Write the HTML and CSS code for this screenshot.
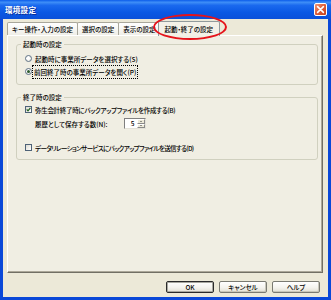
FILE: index.html
```html
<!DOCTYPE html>
<html lang="ja">
<head>
<meta charset="utf-8">
<title>環境設定</title>
<link rel="stylesheet" href="styles.css">
</head>
<body>
<div class="window">
  <div class="titlebar">
    <span class="title">環境設定</span>
    <span class="close-btn"><svg width="9" height="9" viewBox="0 0 9 9"><path d="M1.6 1.6 L7.4 7.4 M7.4 1.6 L1.6 7.4" stroke="#fff" stroke-width="1.6" stroke-linecap="round"/></svg></span>
  </div>
  <div class="client">
    <div class="tabs">
      <div class="tab">キー操作・入力の設定</div>
      <div class="tab">選択の設定</div>
      <div class="tab">表示の設定</div>
      <div class="tab tab--active">起動・終了の設定<span class="mark"></span></div>
    </div>
    <div class="panel">
      <fieldset class="group group--start">
        <legend class="group-title">起動時の設定</legend>
        <div class="row"><span class="radio"></span><span class="label">起動時に事業所データを選択する(S)</span></div>
        <div class="row"><span class="radio radio--on"></span><span class="label label--focus">前回終了時の事業所データを開く(P)</span></div>
      </fieldset>
      <fieldset class="group group--end">
        <legend class="group-title">終了時の設定</legend>
        <div class="row"><span class="check"><svg width="5" height="5" viewBox="0 0 5 5"><path d="M0.7 2.4 L2 3.8 L4.4 0.9" fill="none" stroke="#1d5e1d" stroke-width="1.2"/></svg></span><span class="label label--slight">弥生会計終了時にバックアップファイルを作成する(B)</span></div>
        <div class="row row--sub"><span class="label">履歴として保存する数(N):</span><span class="spin"><span class="spin-value">5</span><span class="spin-arrows"><span class="spin-btn spin-btn--up"></span><span class="spin-btn spin-btn--down"></span></span></span></div>
        <div class="row row--spaced"><span class="check"></span><span class="label label--narrow">データリレーションサービスにバックアップファイルを送信する(D)</span></div>
      </fieldset>
    </div>
    <div class="buttons">
      <button class="btn btn--default">OK</button>
      <button class="btn">キャンセル</button>
      <button class="btn">ヘルプ</button>
    </div>
  </div>
</div>
</body>
</html>
```

FILE: styles.css
```css
* { box-sizing: border-box; }
html, body { margin: 0; padding: 0; }
body {
  width: 331px;
  height: 300px;
  overflow: hidden;
  background: #ECE9D8;
  font-family: "Noto Sans CJK JP", "Noto Sans", sans-serif;
  font-size: 6.5px;
  font-weight: 500;
  color: #000;
  font-feature-settings: "palt";
}
.window {
  width: 331px;
  height: 300px;
  display: flex;
  flex-direction: column;
  background: #0A48D8;
}
.titlebar {
  height: 19px;
  flex: none;
  display: flex;
  align-items: center;
  justify-content: space-between;
  padding: 0 4px 0 5px;
  background: linear-gradient(#0B5CEA 0%, #3E8EF7 12%, #1A69EE 28%, #0A58E4 65%, #0A50DA 100%);
}
.title {
  color: #fff;
  font-weight: bold;
  font-size: 7.5px;
  letter-spacing: 0.3px;
  text-shadow: 1px 1px 0 #0B2F9B;
  font-feature-settings: normal;
}
.close-btn {
  width: 13px;
  height: 13px;
  display: flex;
  align-items: center;
  justify-content: center;
  border: 1px solid #fff;
  border-radius: 2px;
  background: linear-gradient(135deg, #F0977A 0%, #E0613C 45%, #C5401B 100%);
}
.client {
  flex: 1;
  margin: 0 3px 3px;
  background: #ECE9D8;
  display: flex;
  flex-direction: column;
  padding: 1px 5px 4px 4px;
}
.tabs {
  height: 15px;
  flex: none;
  display: flex;
  align-items: flex-end;
  position: relative;
  z-index: 1;
}
.tab {
  height: 13px;
  padding: 0 4px;
  line-height: 12px;
  white-space: nowrap;
  border: 1px solid #A9A79B;
  border-bottom: none;
  border-radius: 2px 2px 0 0;
  background: linear-gradient(#FFFFFF, #EFEEE7);
  margin-right: -1px;
}
.tab--active {
  position: relative;
  height: 15px;
  line-height: 14px;
  margin: 0 -2px -1px -2px;
  padding: 0 6px;
  border-color: #919B9C;
  background: #F3F1E7;
  z-index: 2;
}
.mark {
  position: absolute;
  left: -6px;
  top: -8px;
  width: 74px;
  height: 26px;
  border: 2px solid #E5131B;
  border-radius: 50%;
}
.panel {
  flex: 1;
  background: #F0EEE3;
  border-left: 1px solid #FFFFFF;
  border-top: 1px solid #FFFFFF;
  border-right: 1px solid #716F64;
  border-bottom: 1px solid #716F64;
  box-shadow: inset -1px -1px 0 #ACA899;
  padding: 4px 4px 0 8px;
}
.group {
  margin: 0;
  min-width: 0;
  padding: 4px 6px 6px 8px;
  border: 1px solid #D0D0BF;
  border-radius: 3px;
}
.group--end {
  margin-top: 8px;
  padding-top: 2px;
  padding-bottom: 5px;
}
.group-title {
  padding: 0 2px;
  margin-left: -4px;
  line-height: 8px;
}
.row {
  display: flex;
  align-items: center;
  height: 13px;
  white-space: nowrap;
}
.row--sub {
  margin-top: 1px;
  padding-left: 10px;
}
.row--spaced {
  margin-top: 11px;
}
.label--slight { letter-spacing: -0.3px; }
.label--narrow { letter-spacing: -0.65px; }
.radio {
  width: 7px;
  height: 7px;
  flex: none;
  margin-right: 3px;
  border: 1px solid #5F7386;
  border-radius: 50%;
  background: radial-gradient(circle at 40% 40%, #FFFFFF 30%, #DCDAD0 100%);
  display: flex;
  align-items: center;
  justify-content: center;
}
.radio--on::after {
  content: "";
  width: 3px;
  height: 3px;
  border-radius: 50%;
  background: #2C5A2C;
}
.check {
  width: 7px;
  height: 7px;
  flex: none;
  margin-right: 3px;
  border: 1px solid #4E6277;
  background: linear-gradient(135deg, #DCDAD0, #FFFFFF);
  display: flex;
  align-items: center;
  justify-content: center;
}
.label--focus {
  outline: 1px dotted #000;
  outline-offset: 0;
  padding: 1px 1px;
  margin-left: -2px;
}
.spin {
  display: flex;
  width: 22px;
  height: 11px;
  margin-left: 16px;
  border: 1px solid;
  border-color: #7F7F7F #E4E2D8 #E4E2D8 #7F7F7F;
  background: #FFFFFF;
}
.spin-value {
  flex: 1;
  text-align: right;
  padding-right: 2px;
  line-height: 9px;
}
.spin-arrows {
  width: 8px;
  display: flex;
  flex-direction: column;
}
.spin-btn {
  flex: 1;
  background: #ECE9D8;
  border: 1px solid;
  border-color: #FFFFFF #8A8A8A #8A8A8A #FFFFFF;
  display: flex;
  align-items: center;
  justify-content: center;
}
.spin-btn--up::after {
  content: "";
  border-left: 1.5px solid transparent;
  border-right: 1.5px solid transparent;
  border-bottom: 1.5px solid #333;
}
.spin-btn--down::after {
  content: "";
  border-left: 1.5px solid transparent;
  border-right: 1.5px solid transparent;
  border-top: 1.5px solid #333;
}
.buttons {
  flex: none;
  display: flex;
  justify-content: flex-end;
  gap: 5px;
  margin-top: 8px;
  padding-right: 3px;
}
.btn {
  width: 48px;
  height: 12px;
  padding: 0;
  font: inherit;
  line-height: 10px;
  color: #000;
  border: 1px solid #7A7A72;
  border-radius: 2px;
  background: linear-gradient(#FFFFFF, #F4F3EE 55%, #E2E0D4);
  box-shadow: inset -1px -1px 0 #C9C7BA;
}
.btn--default {
  border-color: #2A2A2A;
  box-shadow: inset 0 0 0 1px #A8A8A0;
}
```
